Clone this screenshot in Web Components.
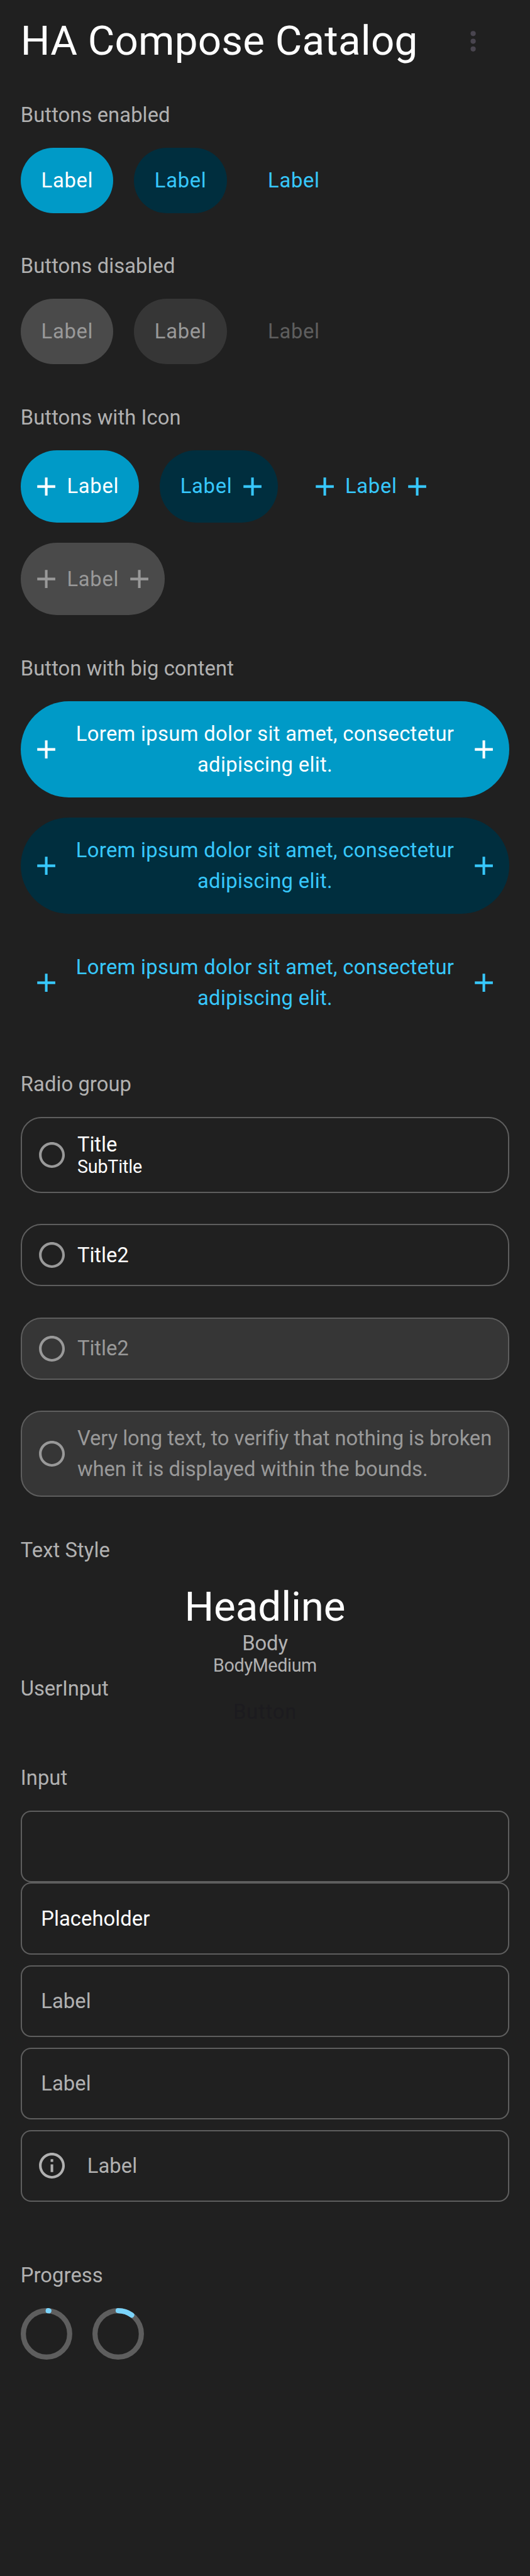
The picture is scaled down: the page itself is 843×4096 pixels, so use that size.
<!DOCTYPE html>
<html lang="en">
<head>
<meta charset="utf-8">
<title>HA Compose Catalog</title>
<style>
:root { --s: .7804px; }
html, body { margin: 0; background: #202020; }
body { font-family: Roboto, "Liberation Sans", sans-serif; color: #fff; min-height: 4096px; overflow-x: hidden; }
</style>
</head>
<body>
<catalog-page></catalog-page>
<script>
const define = (name, css, html) => {
  customElements.define(name, class extends HTMLElement {
    connectedCallback() {
      if (this.shadowRoot) return;
      const root = this.attachShadow({ mode: 'open' });
      root.innerHTML = `<style>${css}</style>${typeof html === 'function' ? html(this) : html}`;
    }
  });
};

const ICONS = {
  plus: '<path d="M19 13h-6v6h-2v-6H5v-2h6V5h2v6h6z"/>',
  info: '<path d="M11 7h2v2h-2zm0 4h2v6h-2zm1-9C6.48 2 2 6.48 2 12s4.48 10 10 10 10-4.48 10-10S17.52 2 12 2zm0 18c-4.41 0-8-3.59-8-8s3.59-8 8-8 8 3.59 8 8-3.59 8-8 8z"/>',
  radio: '<path d="M12 2C6.48 2 2 6.48 2 12s4.48 10 10 10 10-4.48 10-10S17.52 2 12 2zm0 18c-4.42 0-8-3.58-8-8s3.58-8 8-8 8 3.58 8 8-3.58 8-8 8z"/>',
  more: '<circle cx="12" cy="6" r="2"/><circle cx="12" cy="12" r="2"/><circle cx="12" cy="18" r="2"/>'
};
define('md-icon', `
  :host { display: block; flex: none; width: calc(63 * var(--s)); height: calc(63 * var(--s)); }
  svg { display: block; width: 100%; height: 100%; fill: currentColor; }`,
  el => `<svg viewBox="0 0 24 24">${ICONS[el.getAttribute('name')]}</svg>`);

define('app-bar', `
  :host { display: flex; box-sizing: border-box; height: calc(203.3 * var(--s)); padding: calc(31 * var(--s)) calc(84 * var(--s)) 0 calc(42 * var(--s)); justify-content: space-between; }
  h1 { margin: 0; font-weight: 400; font-size: calc(84 * var(--s)); line-height: calc(105 * var(--s)); letter-spacing: calc(.23 * var(--s)); white-space: nowrap; }
  md-icon { color: #49454f; margin-top: calc(22 * var(--s)); }`,
  '<h1><slot></slot></h1><md-icon name="more"></md-icon>');

define('catalog-section', `
  :host { display: block; padding: 0 calc(42 * var(--s)); margin-bottom: calc(77.6 * var(--s)); }
  h2 { margin: 0 0 calc(34.6 * var(--s)); font-weight: 400; font-size: calc(42 * var(--s)); line-height: calc(63 * var(--s)); color: #b1b1b1; letter-spacing: calc(.08 * var(--s)); }
  .body { display: flex; flex-flow: row wrap; gap: calc(42 * var(--s)); }
  :host([stack]) .body { flex-flow: column nowrap; gap: var(--gap, calc(42 * var(--s))); }`,
  el => `<h2>${el.getAttribute('heading')}</h2><div class="body"><slot></slot></div>`);

define('ha-button', `
  :host { display: flex; box-sizing: border-box; align-items: center; height: calc(133 * var(--s)); padding: 0 calc(42 * var(--s)); border-radius: calc(100 * var(--s)); gap: calc(10.5 * var(--s));
    font-size: calc(42 * var(--s)); line-height: calc(63 * var(--s)); letter-spacing: calc(.9 * var(--s)); background: #009ac7; color: #fff; }
  :host([start]), :host([end]) { height: calc(147 * var(--s)); }
  :host([start]) { padding-left: calc(21 * var(--s)); }
  :host([end]) { padding-right: calc(21 * var(--s)); }
  :host([big]) { height: calc(196 * var(--s)); letter-spacing: calc(.41 * var(--s)); }
  :host([variant=filled]) { background: #002e3e; color: #37c8fd; }
  :host([variant=plain]) { background: none; color: #37c8fd; }
  :host([disabled]) { background: #4a4a4a; color: #999; }
  :host([disabled][variant=filled]) { background: #363636; color: #999; }
  :host([disabled][variant=plain]) { background: none; color: #5e5e5e; }
  span { flex: 1; text-align: center; white-space: nowrap; padding-top: calc(1.2 * var(--s)); margin-right: calc(-1 * var(--s)); }
  :host([big]) span { margin-right: 0; }`,
  el => `${el.hasAttribute('start') ? '<md-icon name="plus"></md-icon>' : ''}<span><slot></slot></span>${el.hasAttribute('end') ? '<md-icon name="plus"></md-icon>' : ''}`);

define('radio-card', `
  :host { display: flex; box-sizing: border-box; align-items: center; height: calc(127 * var(--s)); border: calc(3 * var(--s)) solid #5e5e5e; border-radius: calc(42 * var(--s)); padding-left: calc(29.6 * var(--s)); gap: calc(20.4 * var(--s));
    font-size: calc(42 * var(--s)); line-height: calc(63 * var(--s)); letter-spacing: calc(-.07 * var(--s)); }
  :host([disabled]) { background: #363636; color: #999; }
  md-icon { color: #999; }
  div { white-space: nowrap; padding-top: calc(1.2 * var(--s)); }
  ::slotted(small) { display: block; font-size: calc(36.75 * var(--s)); line-height: calc(43.3 * var(--s)); letter-spacing: calc(-.22 * var(--s)); }
  :host([two]) { height: calc(155.5 * var(--s)); line-height: calc(49.5 * var(--s)); }
  :host([tall]) { height: calc(176 * var(--s)); }`,
  '<md-icon name="radio"></md-icon><div><slot></slot></div>');

define('text-field', `
  :host { display: flex; box-sizing: border-box; align-items: center; height: calc(147 * var(--s)); border: calc(3 * var(--s)) solid #5e5e5e; border-radius: calc(21 * var(--s)); padding-left: calc(39.1 * var(--s)); gap: calc(40.7 * var(--s));
    font-size: calc(42 * var(--s)); line-height: calc(63 * var(--s)); color: #b1b1b1; letter-spacing: calc(.05 * var(--s)); margin-bottom: calc(21 * var(--s)); }
  :host([tight]) { margin-bottom: 0; }
  :host([filled]) { color: #fff; }
  :host([icon]) { padding-left: calc(29.6 * var(--s)); }
  span { padding-top: calc(1.2 * var(--s)); }`,
  el => `${el.hasAttribute('icon') ? '<md-icon name="info"></md-icon>' : ''}<span><slot></slot></span>`);

define('type-sample', `
  :host { display: block; text-align: center; font-size: calc(42 * var(--s)); line-height: calc(51.4 * var(--s)); color: #b1b1b1; letter-spacing: calc(-.15 * var(--s)); }
  :host([kind=headline]) { font-size: calc(84 * var(--s)); line-height: calc(97.4 * var(--s)); color: #fff; }
  :host([kind=medium]) { font-size: calc(36.75 * var(--s)); line-height: calc(40.9 * var(--s)); letter-spacing: calc(-.43 * var(--s)); }
  :host([kind=input]) { text-align: left; }
  :host([kind=button]) { line-height: calc(46 * var(--s)); padding-bottom: calc(1.3 * var(--s)); color: #1c1b1f; letter-spacing: calc(1.04 * var(--s)); }`,
  '<slot></slot>');

define('progress-ring', `
  :host { display: block; width: calc(105 * var(--s)); height: calc(105 * var(--s)); }
  svg { display: block; width: 100%; height: 100%; fill: none; stroke-width: 4; }`,
  el => `<svg viewBox="0 0 40 40"><circle cx="20" cy="20" r="18" stroke="#5e5e5e"/><circle cx="20" cy="20" r="18" stroke="#7bd4fb" stroke-linecap="round" pathLength="360" stroke-dasharray="${el.getAttribute('sweep')} 360" transform="rotate(${-90 + +el.getAttribute('from')} 20 20)"/></svg>`);

define('catalog-page', `
  :host { display: block; }
  .radios { --gap: calc(63 * var(--s)); }
  .flush { --gap: 0; }
  .inputs { --gap: 0; margin-bottom: calc(98 * var(--s)); }`, `
  <app-bar>HA Compose Catalog</app-bar>
  <catalog-section heading="Buttons enabled">
    <ha-button>Label</ha-button><ha-button variant="filled">Label</ha-button><ha-button variant="plain">Label</ha-button>
  </catalog-section>
  <catalog-section heading="Buttons disabled">
    <ha-button disabled>Label</ha-button><ha-button variant="filled" disabled>Label</ha-button><ha-button variant="plain" disabled>Label</ha-button>
  </catalog-section>
  <catalog-section heading="Buttons with Icon">
    <ha-button start>Label</ha-button><ha-button variant="filled" end>Label</ha-button><ha-button variant="plain" start end>Label</ha-button><ha-button disabled start end>Label</ha-button>
  </catalog-section>
  <catalog-section stack heading="Button with big content">
    <ha-button big start end>Lorem ipsum dolor sit amet, consectetur<br>adipiscing elit.</ha-button>
    <ha-button big variant="filled" start end>Lorem ipsum dolor sit amet, consectetur<br>adipiscing elit.</ha-button>
    <ha-button big variant="plain" start end>Lorem ipsum dolor sit amet, consectetur<br>adipiscing elit.</ha-button>
  </catalog-section>
  <catalog-section stack class="radios" heading="Radio group">
    <radio-card two>Title<small>SubTitle</small></radio-card>
    <radio-card>Title2</radio-card>
    <radio-card disabled>Title2</radio-card>
    <radio-card disabled tall>Very long text, to verifiy that nothing is broken<br>when it is displayed within the bounds.</radio-card>
  </catalog-section>
  <catalog-section stack class="flush" heading="Text Style">
    <type-sample kind="headline">Headline</type-sample>
    <type-sample>Body</type-sample>
    <type-sample kind="medium">BodyMedium</type-sample>
    <type-sample kind="input">UserInput</type-sample>
    <type-sample kind="button">Button</type-sample>
  </catalog-section>
  <catalog-section stack class="inputs" heading="Input">
    <text-field tight></text-field>
    <text-field filled>Placeholder</text-field>
    <text-field>Label</text-field>
    <text-field>Label</text-field>
    <text-field icon>Label</text-field>
  </catalog-section>
  <catalog-section heading="Progress">
    <progress-ring from="5.8" sweep="0.1"></progress-ring><progress-ring from="0" sweep="36"></progress-ring>
  </catalog-section>`);
</script>
</body>
</html>
